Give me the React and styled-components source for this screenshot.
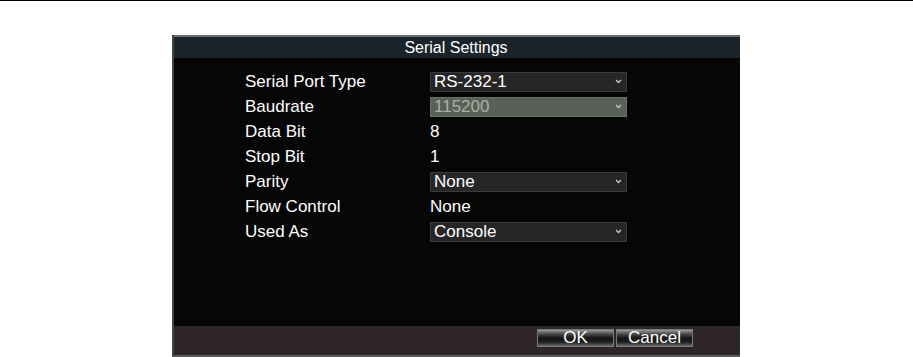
import React from 'react';
import styled, { createGlobalStyle } from 'styled-components';

const Global = createGlobalStyle`
  html, body {
    margin: 0;
    padding: 0;
    background: #fff;
  }
  body {
    font-family: "Liberation Sans", Arial, sans-serif;
  }
`;

const Page = styled.div`
  width: 913px;
  height: 357px;
  border-top: 1px solid #000;
  box-sizing: border-box;
  padding: 34px 0 0 172px;
  overflow: hidden;
`;

const Panel = styled.div`
  width: 568px;
  height: 322px;
  box-sizing: border-box;
  display: flex;
  flex-direction: column;
  background: #060606;
  border-left: 2px solid #3e4646;
  border-bottom: 2px solid #565c5c;
`;

const TitleBar = styled.div`
  height: 23px;
  box-sizing: border-box;
  border-top: 2px solid #6a6e6e;
  background: #1b232b;
  color: #fff;
  font-size: 16px;
  display: flex;
  align-items: center;
  justify-content: center;
  padding-right: 2px;
`;

const Body = styled.div`
  flex: 1;
  padding: 11px 0 0 71px;
  display: flex;
  flex-direction: column;
`;

const Row = styled.div`
  height: 25px;
  display: flex;
  align-items: center;
  color: #fff;
  font-size: 17px;
`;

const Label = styled.div`
  width: 185px;
`;

const Value = styled.div``;

const Select = styled.div`
  width: 197px;
  height: 20px;
  box-sizing: border-box;
  display: flex;
  align-items: center;
  justify-content: space-between;
  padding: 0 4px 0 3px;
  background: ${p => (p.disabled ? '#596057' : '#262626')};
  border: 1px solid ${p => (p.disabled ? '#6a7068' : '#3a3a3a')};
  color: ${p => (p.disabled ? '#a9b0a6' : '#fff')};
`;

const Footer = styled.div`
  height: 29px;
  background: #2e2627;
  display: flex;
  justify-content: flex-end;
  gap: 2px;
  padding: 3px 47px 0 0;
  box-sizing: border-box;
`;

const Button = styled.div`
  width: 77px;
  height: 18px;
  box-sizing: border-box;
  border: 1px solid #7a7a7a;
  background: linear-gradient(#9a9a9a 0%, #4a4a4a 25%, #161616 50%, #1e1e1e 75%, #6a6a6a 100%);
  color: #fff;
  font-size: 17px;
  line-height: 16px;
  text-align: center;
`;

function Chevron() {
  return (
    <svg width="7" height="5" viewBox="0 0 7 5">
      <polyline points="1,1 3.5,3.5 6,1" fill="none" stroke="#c8c8c8" strokeWidth="1.3" />
    </svg>
  );
}

const rows = [
  { label: 'Serial Port Type', value: 'RS-232-1', select: true },
  { label: 'Baudrate', value: '115200', select: true, disabled: true },
  { label: 'Data Bit', value: '8' },
  { label: 'Stop Bit', value: '1' },
  { label: 'Parity', value: 'None', select: true },
  { label: 'Flow Control', value: 'None' },
  { label: 'Used As', value: 'Console', select: true },
];

export default function App() {
  return (
    <>
      <Global />
      <Page>
        <Panel>
          <TitleBar>Serial Settings</TitleBar>
          <Body>
            {rows.map(r => (
              <Row key={r.label}>
                <Label>{r.label}</Label>
                {r.select ? (
                  <Select disabled={r.disabled}>
                    <span>{r.value}</span>
                    <Chevron />
                  </Select>
                ) : (
                  <Value>{r.value}</Value>
                )}
              </Row>
            ))}
          </Body>
          <Footer>
            <Button>OK</Button>
            <Button>Cancel</Button>
          </Footer>
        </Panel>
      </Page>
    </>
  );
}
